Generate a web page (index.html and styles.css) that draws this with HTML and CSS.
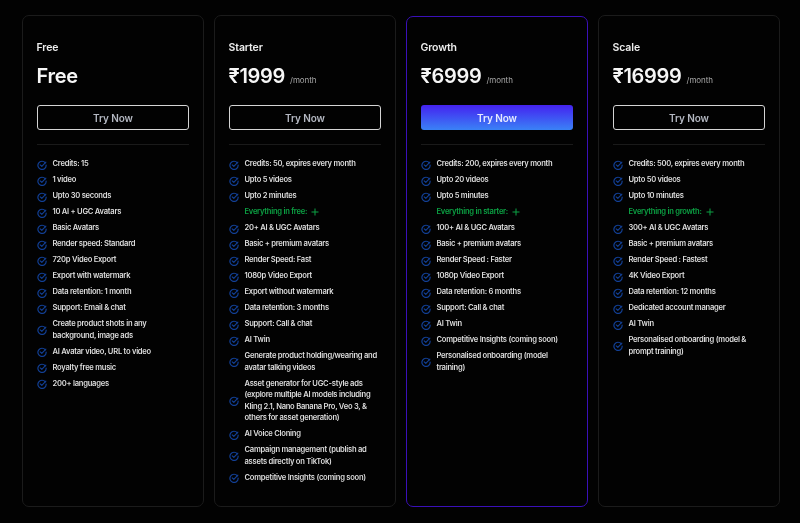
FILE: index.html
```html
<!DOCTYPE html>
<html lang="en">
<head>
<meta charset="utf-8">
<title>Pricing</title>
<link rel="stylesheet" href="styles.css">
</head>
<body>
<svg class="defs" width="0" height="0" aria-hidden="true">
  <symbol id="check" viewBox="0 0 10 10">
    <path d="M8.3 2.9A4.1 4.1 0 1 0 9.1 5" fill="none" stroke="currentColor" stroke-width="1.2" stroke-linecap="round"/>
    <path d="M3.2 4.9 4.8 6.4 8.9 2.2" fill="none" stroke="currentColor" stroke-width="1.2" stroke-linecap="round" stroke-linejoin="round"/>
  </symbol>
  <symbol id="plus" viewBox="0 0 8 8">
    <path d="M4 .5v7M.5 4h7" fill="none" stroke="currentColor" stroke-width="1"/>
  </symbol>
</svg>
<main class="plans">

<section class="card">
  <h2 class="name">Free</h2>
  <p class="price"><span class="amount">Free</span></p>
  <button class="btn">Try Now</button>
  <hr class="rule">
  <ul class="list">
    <li><svg class="tick"><use href="#check"/></svg><span>Credits: 15</span></li>
    <li><svg class="tick"><use href="#check"/></svg><span>1 video</span></li>
    <li><svg class="tick"><use href="#check"/></svg><span>Upto 30 seconds</span></li>
    <li><svg class="tick"><use href="#check"/></svg><span>10 AI + UGC Avatars</span></li>
    <li><svg class="tick"><use href="#check"/></svg><span>Basic Avatars</span></li>
    <li><svg class="tick"><use href="#check"/></svg><span>Render speed: Standard</span></li>
    <li><svg class="tick"><use href="#check"/></svg><span>720p Video Export</span></li>
    <li><svg class="tick"><use href="#check"/></svg><span>Export with watermark</span></li>
    <li><svg class="tick"><use href="#check"/></svg><span>Data retention: 1 month</span></li>
    <li><svg class="tick"><use href="#check"/></svg><span>Support: Email &amp; chat</span></li>
    <li><svg class="tick"><use href="#check"/></svg><span>Create product shots in any background, image ads</span></li>
    <li><svg class="tick"><use href="#check"/></svg><span>AI Avatar video, URL to video</span></li>
    <li><svg class="tick"><use href="#check"/></svg><span>Royalty free music</span></li>
    <li><svg class="tick"><use href="#check"/></svg><span>200+ languages</span></li>
  </ul>
</section>

<section class="card">
  <h2 class="name">Starter</h2>
  <p class="price"><span class="amount">₹1999</span><span class="per">/month</span></p>
  <button class="btn">Try Now</button>
  <hr class="rule">
  <ul class="list">
    <li><svg class="tick"><use href="#check"/></svg><span>Credits: 50, expires every month</span></li>
    <li><svg class="tick"><use href="#check"/></svg><span>Upto 5 videos</span></li>
    <li><svg class="tick"><use href="#check"/></svg><span>Upto 2 minutes</span></li>
    <li class="more"><span>Everything in free:</span><svg class="plus"><use href="#plus"/></svg></li>
    <li><svg class="tick"><use href="#check"/></svg><span>20+ AI &amp; UGC Avatars</span></li>
    <li><svg class="tick"><use href="#check"/></svg><span>Basic + premium avatars</span></li>
    <li><svg class="tick"><use href="#check"/></svg><span>Render Speed: Fast</span></li>
    <li><svg class="tick"><use href="#check"/></svg><span>1080p Video Export</span></li>
    <li><svg class="tick"><use href="#check"/></svg><span>Export without watermark</span></li>
    <li><svg class="tick"><use href="#check"/></svg><span>Data retention: 3 months</span></li>
    <li><svg class="tick"><use href="#check"/></svg><span>Support: Call &amp; chat</span></li>
    <li><svg class="tick"><use href="#check"/></svg><span>AI Twin</span></li>
    <li><svg class="tick"><use href="#check"/></svg><span>Generate product holding/wearing and avatar talking videos</span></li>
    <li><svg class="tick"><use href="#check"/></svg><span>Asset generator for UGC-style ads (explore multiple AI models including Kling 2.1, Nano Banana Pro, Veo 3, &amp; others for asset generation)</span></li>
    <li><svg class="tick"><use href="#check"/></svg><span>AI Voice Cloning</span></li>
    <li><svg class="tick"><use href="#check"/></svg><span>Campaign management (publish ad assets directly on TikTok)</span></li>
    <li><svg class="tick"><use href="#check"/></svg><span>Competitive Insights (coming soon)</span></li>
  </ul>
</section>

<section class="card card-featured">
  <h2 class="name">Growth</h2>
  <p class="price"><span class="amount">₹6999</span><span class="per">/month</span></p>
  <button class="btn btn-primary">Try Now</button>
  <hr class="rule">
  <ul class="list">
    <li><svg class="tick"><use href="#check"/></svg><span>Credits: 200, expires every month</span></li>
    <li><svg class="tick"><use href="#check"/></svg><span>Upto 20 videos</span></li>
    <li><svg class="tick"><use href="#check"/></svg><span>Upto 5 minutes</span></li>
    <li class="more"><span>Everything in starter:</span><svg class="plus"><use href="#plus"/></svg></li>
    <li><svg class="tick"><use href="#check"/></svg><span>100+ AI &amp; UGC Avatars</span></li>
    <li><svg class="tick"><use href="#check"/></svg><span>Basic + premium avatars</span></li>
    <li><svg class="tick"><use href="#check"/></svg><span>Render Speed : Faster</span></li>
    <li><svg class="tick"><use href="#check"/></svg><span>1080p Video Export</span></li>
    <li><svg class="tick"><use href="#check"/></svg><span>Data retention: 6 months</span></li>
    <li><svg class="tick"><use href="#check"/></svg><span>Support: Call &amp; chat</span></li>
    <li><svg class="tick"><use href="#check"/></svg><span>AI Twin</span></li>
    <li><svg class="tick"><use href="#check"/></svg><span>Competitive Insights (coming soon)</span></li>
    <li><svg class="tick"><use href="#check"/></svg><span>Personalised onboarding (model training)</span></li>
  </ul>
</section>

<section class="card">
  <h2 class="name">Scale</h2>
  <p class="price"><span class="amount">₹16999</span><span class="per">/month</span></p>
  <button class="btn">Try Now</button>
  <hr class="rule">
  <ul class="list">
    <li><svg class="tick"><use href="#check"/></svg><span>Credits: 500, expires every month</span></li>
    <li><svg class="tick"><use href="#check"/></svg><span>Upto 50 videos</span></li>
    <li><svg class="tick"><use href="#check"/></svg><span>Upto 10 minutes</span></li>
    <li class="more"><span>Everything in growth:</span><svg class="plus"><use href="#plus"/></svg></li>
    <li><svg class="tick"><use href="#check"/></svg><span>300+ AI &amp; UGC Avatars</span></li>
    <li><svg class="tick"><use href="#check"/></svg><span>Basic + premium avatars</span></li>
    <li><svg class="tick"><use href="#check"/></svg><span>Render Speed : Fastest</span></li>
    <li><svg class="tick"><use href="#check"/></svg><span>4K Video Export</span></li>
    <li><svg class="tick"><use href="#check"/></svg><span>Data retention: 12 months</span></li>
    <li><svg class="tick"><use href="#check"/></svg><span>Dedicated account manager</span></li>
    <li><svg class="tick"><use href="#check"/></svg><span>AI Twin</span></li>
    <li><svg class="tick"><use href="#check"/></svg><span>Personalised onboarding (model &amp; prompt training)</span></li>
  </ul>
</section>

</main>
</body>
</html>
```

FILE: styles.css
```css
* { box-sizing: border-box; }
html, body { margin: 0; height: 100%; }
html { background: #020202; }
body {
  color: #e8e8e8;
  font-family: Inter, "Noto Sans", sans-serif;
  overflow: hidden;
}
.defs { position: absolute; }
.plans {
  display: grid;
  grid-template-columns: repeat(4, 182px);
  column-gap: 10px;
  padding: 15px 0 0 22px;
  filter: blur(0.4px);
}
.card {
  height: 492px;
  padding: 26px 14px 0;
  border: 1px solid #1b1b1b;
  border-radius: 7px;
}
.card-featured {
  margin-top: 1px;
  height: 491px;
  padding-top: 25px;
  border-color: #3a10b8;
}
.name {
  margin: 0 0 0 -0.5px;
  font-size: 10.5px;
  line-height: 12px;
  font-weight: 600;
  letter-spacing: -0.1px;
  color: #eeeeee;
}
.price {
  display: flex;
  align-items: baseline;
  height: 24px;
  margin: 10px 0 17px -0.5px;
}
.amount {
  font-size: 20px;
  line-height: 24px;
  font-weight: 600;
  letter-spacing: -0.3px;
  color: #f6f6f6;
}
.per {
  margin-left: 5px;
  font-size: 8px;
  letter-spacing: -0.05px;
  color: #a8a8a8;
}
.btn {
  display: block;
  width: 100%;
  height: 25px;
  padding: 0;
  background: transparent;
  border: 1px solid #d4d4d4;
  border-radius: 3px;
  color: #b4b8c2;
  font: 600 10px Inter, sans-serif;
  letter-spacing: -0.1px;
}
.btn-primary {
  background: linear-gradient(180deg, #4422f0 0%, #3a82f6 100%);
  border: 0;
  color: #e6eaff;
}
.rule {
  height: 1px;
  margin: 14px 0 13px;
  background: #1a1a1a;
  border: 0;
}
.list {
  display: flex;
  flex-direction: column;
  gap: 4.5px;
  margin: 0;
  padding: 0;
  list-style: none;
}
.list li {
  display: flex;
  align-items: center;
  gap: 5.5px;
  font-size: 7.6px;
  line-height: 11.5px;
  font-weight: 600;
  letter-spacing: -0.26px;
  color: #dedede;
}
.tick {
  flex: none;
  width: 10px;
  height: 10px;
  margin-top: 1.5px;
  color: #123f94;
}
.list .more {
  gap: 4px;
  padding-left: 15.5px;
  color: #0ca244;
}
.plus {
  width: 8px;
  height: 8px;
  color: #0ca244;
}
```
